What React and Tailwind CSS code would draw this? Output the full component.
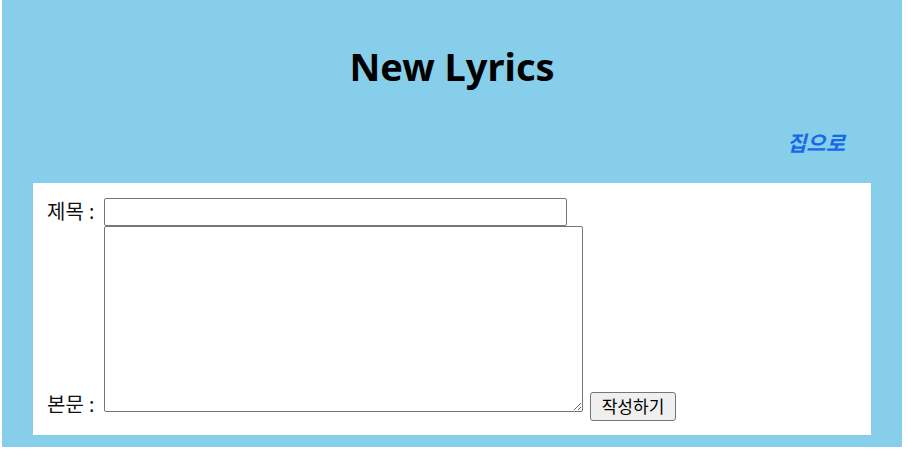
export default function App() {
    return (
        <div className="w-[908px] h-[456px] bg-white pl-[2px] pr-[6px] pb-[9px]" style={{ fontFamily: '"Noto Sans", "Noto Sans CJK KR", sans-serif' }}>
            <div className="h-[447px] bg-[#87ceeb] flex flex-col">
                <h1 className="pt-[40px] text-center text-[38px] font-bold leading-[52px] text-black">New Lyrics</h1>

                <div className="mt-[38px] flex justify-end pr-[57px]">
                    <a href="#" className="text-[21px] font-bold italic leading-[26px] text-[#1769e8]">집으로</a>
                </div>

                <div className="mx-[31px] mt-[27px] h-[252px] bg-white pl-[14px] pt-[15px] text-[20px] text-[#111]">
                    <div className="flex items-center">
                        <span className="w-[57px] leading-[28px]">제목 :</span>
                        <input type="text" className="w-[463px] h-[28px] border border-[#767676] rounded-[2px] px-1 outline-none" />
                    </div>
                    <div className="flex items-end">
                        <span className="w-[57px] leading-[24px] mb-[-5px]">본문 :</span>
                        <textarea className="w-[479px] h-[186px] border border-[#767676] rounded-[2px] resize" />
                        <button className="ml-[7px] mb-[-9px] h-[29px] w-[86px] border border-[#767676] rounded-[3px] bg-[#efefef] text-[17px] text-black leading-none">작성하기</button>
                    </div>
                </div>
            </div>
        </div>
    )
}
